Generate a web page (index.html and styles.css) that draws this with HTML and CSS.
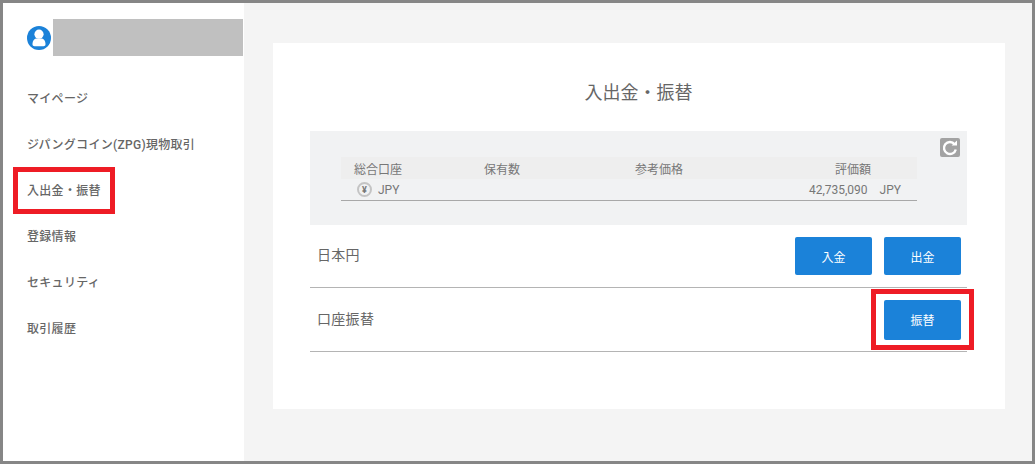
FILE: index.html
```html
<!DOCTYPE html>
<html lang="ja">
<head>
  <meta charset="UTF-8">
  <title>入出金・振替</title>
  <link rel="stylesheet" href="styles.css">
</head>
<body>

<div class="frame">
  <div class="sidebar">
    <div class="user">
      <svg class="user-icon" width="24" height="24" viewBox="0 0 24 24">
        <circle cx="12" cy="12" r="12" fill="#1b82d9"/>
        <circle cx="12" cy="8.2" r="4.6" fill="#fff"/>
        <path d="M5.5 18.5 C5.5 14.5 7.5 12.6 10 12.6 H14 C16.5 12.6 18.5 14.5 18.5 18.5 C18.5 19.6 17.5 20.2 16.5 20.2 H7.5 C6.5 20.2 5.5 19.6 5.5 18.5 Z" fill="#fff"/>
      </svg>
      <div class="user-name"></div>
    </div>
    <ul class="menu">
      <li>マイページ</li>
      <li>ジパングコイン(ZPG)現物取引</li>
      <li class="marked">入出金・振替</li>
      <li>登録情報</li>
      <li>セキュリティ</li>
      <li>取引履歴</li>
    </ul>
  </div>

  <div class="main">
    <div class="card">
      <h1>入出金・振替</h1>

      <div class="balance">
        <button class="reload" aria-label="更新">
          <svg width="20" height="20" viewBox="0 0 20 20">
            <path d="M14.6 6.2 A6 6 0 1 0 15.8 11.5" fill="none" stroke="#fff" stroke-width="2.4"/>
            <path d="M11.6 7.6 H17 V2.4 Z" fill="#fff"/>
          </svg>
        </button>
        <div class="table-head">
          <span class="col-name">総合口座</span>
          <span class="col-amount">保有数</span>
          <span class="col-price">参考価格</span>
          <span class="col-value">評価額</span>
        </div>
        <div class="table-row">
          <span class="yen">¥</span>
          <span class="code">JPY</span>
          <span class="total">42,735,090</span>
          <span class="unit">JPY</span>
        </div>
      </div>

      <div class="row">
        <span class="row-title">日本円</span>
        <div class="actions">
          <button class="button">入金</button>
          <button class="button">出金</button>
        </div>
      </div>
      <div class="row row-transfer">
        <span class="row-title">口座振替</span>
        <div class="actions">
          <button class="button marked-button">振替</button>
        </div>
      </div>
    </div>
  </div>
</div>

</body>
</html>
```

FILE: styles.css
```css
html, body {
  margin: 0;
  padding: 0;
}

body {
  font-family: "Roboto", "Noto Sans CJK JP", sans-serif;
  color: #666;
}

.frame {
  display: flex;
  box-sizing: border-box;
  width: 1035px;
  height: 464px;
  border: 3px solid #868686;
  background-color: #f4f4f4;
}

.sidebar {
  width: 241px;
  background-color: white;
}

.user {
  display: flex;
  align-items: center;
  margin-top: 16px;
  padding: 0 1px 0 24px;
}

.user-icon {
  flex: none;
}

.user-name {
  flex: 1;
  height: 37px;
  margin-left: 2px;
  background-color: #c0c0c0;
}

.menu {
  list-style: none;
  margin: 34px 0 0;
  padding: 0 0 0 24px;
}

.menu li {
  height: 46px;
  font-size: 12px;
  line-height: 18px;
  font-weight: 500;
  letter-spacing: 0.3px;
  white-space: nowrap;
}

/* red notes drawn over the screenshot */
.marked {
  position: relative;
}

.marked::after {
  content: "";
  position: absolute;
  left: -14px;
  top: -15px;
  width: 92px;
  height: 37px;
  border: 5px solid #ee1c25;
}

.marked-button {
  position: relative;
}

.marked-button::after {
  content: "";
  position: absolute;
  left: -13px;
  top: -11px;
  width: 93px;
  height: 51px;
  border: 5px solid #ee1c25;
}

.main {
  flex: 1;
  padding: 40px 27px 0 29px;
}

.card {
  box-sizing: border-box;
  height: 366px;
  padding: 0 38px 0 37px;
  background-color: white;
}

h1 {
  margin: 0;
  padding-top: 38px;
  height: 50px;
  box-sizing: content-box;
  font-size: 18px;
  line-height: 24px;
  font-weight: 400;
  text-align: center;
  color: #666;
}

.balance {
  position: relative;
  box-sizing: border-box;
  height: 94px;
  padding: 26px 50px 0 31px;
  background-color: #f1f2f3;
}

.reload {
  position: absolute;
  top: 7px;
  right: 7px;
  display: flex;
  align-items: center;
  justify-content: center;
  width: 20px;
  height: 19px;
  padding: 0;
  border: none;
  border-radius: 2px;
  background-color: #a3a3a3;
}

.table-head {
  display: flex;
  height: 22px;
  align-items: center;
  font-size: 12px;
  color: #777;
  background-color: #eeeeee;
}

.col-name {
  width: 130px;
  padding-left: 13px;
}

.col-amount {
  width: 151px;
}

.col-price {
  flex: 1;
}

.col-value {
  padding-right: 46px;
}

.table-row {
  display: flex;
  align-items: center;
  height: 21px;
  border-bottom: 1px solid #a8a8a8;
  font-size: 12px;
  color: #777;
}

.yen {
  display: flex;
  align-items: center;
  justify-content: center;
  box-sizing: border-box;
  width: 15px;
  height: 15px;
  margin-left: 16px;
  border: 2px solid #c4c4c4;
  border-radius: 50%;
  font-size: 9px;
  font-weight: 700;
  color: #777;
}

.code {
  margin-left: 6px;
  flex: 1;
}

.unit {
  margin-left: 12px;
  margin-right: 16px;
}

.row {
  display: flex;
  justify-content: space-between;
  align-items: center;
  box-sizing: border-box;
  height: 63px;
  padding: 0 6px 0 7px;
  border-bottom: 1px solid #b4b4b4;
}

.row-transfer {
  height: 64px;
}

.row-title {
  margin-bottom: 4px;
  font-size: 14px;
  letter-spacing: 0.3px;
}

.actions {
  display: flex;
  gap: 12px;
}

.button {
  width: 77px;
  height: 38px;
  padding: 0;
  border: none;
  border-radius: 2px;
  font-family: inherit;
  font-size: 12px;
  color: white;
  background-color: #1b82d9;
}

.marked-button {
  height: 40px;
}
```
